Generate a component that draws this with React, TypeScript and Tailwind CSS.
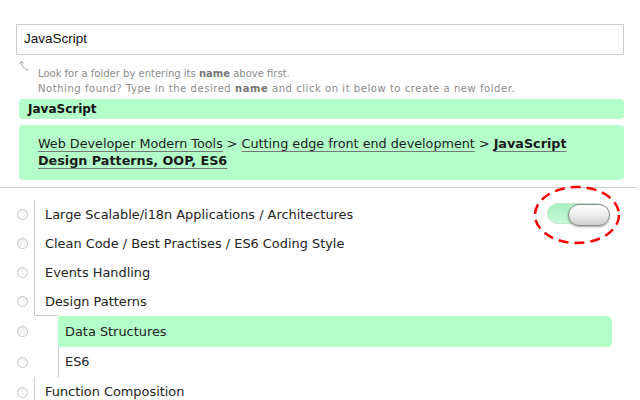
import React from 'react';

const GREEN = 'bg-[#b4fec9]';

function Radio() {
  return (
    <span className="block w-[11px] h-[11px] rounded-full border border-[#c4c4c4] bg-gradient-to-b from-[#f2f2f2] to-white" />
  );
}

function Toggle() {
  return (
    <div className="relative w-[63px] h-[22px]">
      <div className="absolute left-0 top-[-1px] w-[60px] h-[21px] rounded-full bg-gradient-to-b from-[#a8f0c0] to-[#c6f9d6] border border-[#bfe8cc]" />
      <div className="absolute right-0 top-0 w-[42px] h-[22px] rounded-full border border-[#8a8a8a] bg-gradient-to-b from-white via-[#ededed] to-[#cfcfcf] shadow-[0_1px_2px_rgba(0,0,0,0.35)]" />
      <svg className="absolute left-[-14px] top-[-19px] pointer-events-none" width="92" height="62" viewBox="0 0 92 62">
        <ellipse cx="44" cy="30" rx="42" ry="28" fill="none" stroke="#ff0000" strokeWidth="2.5" strokeDasharray="10 6" />
      </svg>
    </div>
  );
}

interface RowProps {
  label: string;
  depth?: number;
  active?: boolean;
  corner?: boolean;
  h?: string;
  children?: React.ReactNode;
}

function Row({ label, depth = 0, active = false, corner = false, h = 'h-[29px]', children }: RowProps) {
  return (
    <div className={`flex items-stretch ${h}`}>
      <div className="w-[34px] flex items-center pl-[17px] shrink-0">
        <Radio />
      </div>
      {depth === 1 && <div className={`w-[24px] shrink-0 ${corner ? 'border-t border-[#c8c8c8] -mt-px' : ''}`} />}
      <div
        className={`flex-1 flex items-center justify-between border-l ${
          active ? `${GREEN} border-[#b4fec9] rounded-r-[5px]` : 'border-[#c8c8c8]'
        } ${depth === 1 ? 'pl-[6px]' : 'pl-[10px]'} pr-[2px]`}
      >
        <span>{label}</span>
        {children}
      </div>
    </div>
  );
}

export default function App() {
  return (
    <div className="w-[640px] h-[400px] overflow-hidden bg-white text-[#1e1e1e] font-['DejaVu_Sans',sans-serif]">
      <div className="px-4 pt-6">
        <div className="h-[31px] w-[608px] border border-[#cccccc] flex items-center pl-[7px] text-[13.5px] font-['Liberation_Sans',sans-serif] text-[#111]">
          JavaScript
        </div>
        <div className="flex mt-[5px] text-[10px] leading-[15px] text-[#8a8a8a]">
          <div className="w-[22px] shrink-0 pl-[3px]">
            <svg width="10" height="12" viewBox="0 0 10 12" fill="none" stroke="#a8a8a8" strokeWidth="1">
              <path d="M2.5 1.5 C 2.5 7, 5 9.5, 9.5 10" />
              <path d="M0.5 4 L2.5 1.2 L4.8 3.6" />
            </svg>
          </div>
          <div className="pt-[6px]">
            <div>
              Look for a folder by entering its <b className="font-bold text-[#777]">name</b> above first.
            </div>
            <div className="tracking-[0.55px]">
              Nothing found? Type in the desired <b className="font-bold text-[#777]">name</b> and click on it below to create a new folder.
            </div>
          </div>
        </div>
        <div className={`mt-[3px] ml-[3px] w-[605px] h-[20px] rounded-[4px] ${GREEN} pl-[9px] text-[12px] leading-[20px] font-bold text-[#111]`}>
          JavaScript
        </div>
        <div className={`mt-[6px] ml-[3px] w-[605px] h-[55px] rounded-[4px] ${GREEN} pl-[19px] pr-[40px] pt-[10px] text-[12.75px] leading-[17px] text-[#1a1a1a]`}>
          <span className="underline decoration-[#777] underline-offset-[3px]">Web Developer Modern Tools</span>
          {' > '}
          <span className="underline decoration-[#777] underline-offset-[3px]">Cutting edge front end development</span>
          {' > '}
          <span className="font-bold underline decoration-[#777] underline-offset-[3px]">JavaScript Design Patterns, OOP, ES6</span>
        </div>
      </div>
      <div className="mt-[7px] w-[637px] border-t border-[#cccccc]" />
      <div className="pt-[12px] w-[612px] text-[12.9px] text-[#222]">
        <Row label="Large Scalable/i18n Applications / Architectures">
          <Toggle />
        </Row>
        <Row label="Clean Code / Best Practises / ES6 Coding Style" />
        <Row label="Events Handling" />
        <Row label="Design Patterns" />
        <Row label="Data Structures" depth={1} active corner h="h-[31px]" />
        <Row label="ES6" depth={1} h="h-[30px]" />
        <Row label="Function Composition" h="h-[30px]" />
      </div>
    </div>
  );
}
